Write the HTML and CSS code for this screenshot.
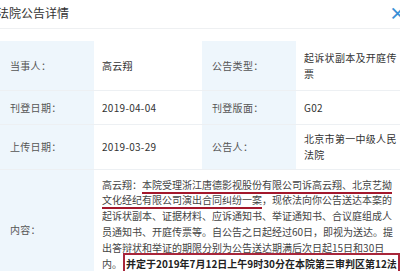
FILE: index.html
```html
<!DOCTYPE html>
<html lang="zh-CN">
<head>
    <meta charset="UTF-8">
    <title>法院公告详情</title>
    <link rel="stylesheet" href="styles.css">
</head>
<body>
    <div id="dialog">
        <div class="dialog-head">
            <h1>法院公告详情</h1>
            <span class="close">&times;</span>
        </div>
        <table class="notice">
            <tr class="row-party">
                <td class="label">当事人：</td>
                <td class="value">高云翔</td>
                <td class="label">公告类型：</td>
                <td class="value">起诉状副本及开庭传<br>票</td>
            </tr>
            <tr class="row-date">
                <td class="label">刊登日期：</td>
                <td class="value">2019-04-04</td>
                <td class="label">刊登版面：</td>
                <td class="value">G02</td>
            </tr>
            <tr class="row-upload">
                <td class="label">上传日期：</td>
                <td class="value">2019-03-29</td>
                <td class="label">公告人：</td>
                <td class="value">北京市第一中级人民<br>法院</td>
            </tr>
            <tr class="row-content">
                <td class="label">内容：</td>
                <td class="value content" colspan="3">
                    <p>高云翔：<span class="mark">本院受理浙江唐德影视股份有限公司诉高云翔、北京艺拗</span><br><span class="mark">文化经纪有限公司演出合同纠纷一案</span>，现依法向你公告送达本案的<br>起诉状副本、证据材料、应诉通知书、举证通知书、合议庭组成人<br>员通知书、开庭传票等。自公告之日起经过60日，即视为送达。提<br>出答辩状和举证的期限分别为公告送达期满后次日起15日和30日<br>内。<span class="boxed">并定于2019年7月12日上午9时30分在本院第三审判区第12法</span></p>
                </td>
            </tr>
        </table>
    </div>
</body>
</html>
```

FILE: styles.css
```css
html, body {
    margin: 0;
    padding: 0;
    background: #fff;
    overflow: hidden;
}
body {
    font-family: "Noto Sans CJK SC", "Noto Sans", sans-serif;
    color: #333;
}
#dialog {
    width: 400px;
}
.dialog-head {
    display: flex;
    justify-content: space-between;
    align-items: center;
    height: 26px;
    padding-bottom: 2px;
    border-bottom: 1px solid #eef0f2;
}
.dialog-head h1 {
    margin: 0 0 0 -3px;
    font-size: 12px;
    font-weight: normal;
    line-height: 22px;
    color: #333;
}
.close {
    margin-right: -6px;
    font-size: 17px;
    font-weight: bold;
    line-height: 20px;
    color: #3b8fd6;
}
.notice {
    margin-top: 12px;
    width: 400px;
    border-collapse: collapse;
    table-layout: fixed;
    font-size: 10px;
    letter-spacing: 0.3px;
    line-height: 16px;
}
.notice td {
    border-bottom: 1px solid #edf0f3;
    vertical-align: middle;
}
.notice td.label {
    width: 83px;
    padding-left: 10px;
    background: #eef6fc;
    color: #555;
}
.notice td.value {
    width: 99px;
    padding-left: 8px;
    background: #fff;
    color: #333;
}
.row-party td {
    height: 47px;
}
.row-date td {
    height: 31px;
}
.row-upload td {
    height: 42px;
}
.row-content td {
    height: 118px;
}
.content p {
    margin: 0;
    padding: 0 0 12px;
    white-space: nowrap;
    letter-spacing: 0;
    line-height: 15.8px;
    color: #444;
}
.mark {
    text-decoration: underline;
    text-decoration-color: #a3182c;
    text-decoration-thickness: 2px;
    text-underline-offset: 3px;
}
.boxed {
    margin-left: 1px;
    padding: 1px 1px 2px;
    border: 2px solid #a8263a;
    font-weight: bold;
    color: #222;
}
```
